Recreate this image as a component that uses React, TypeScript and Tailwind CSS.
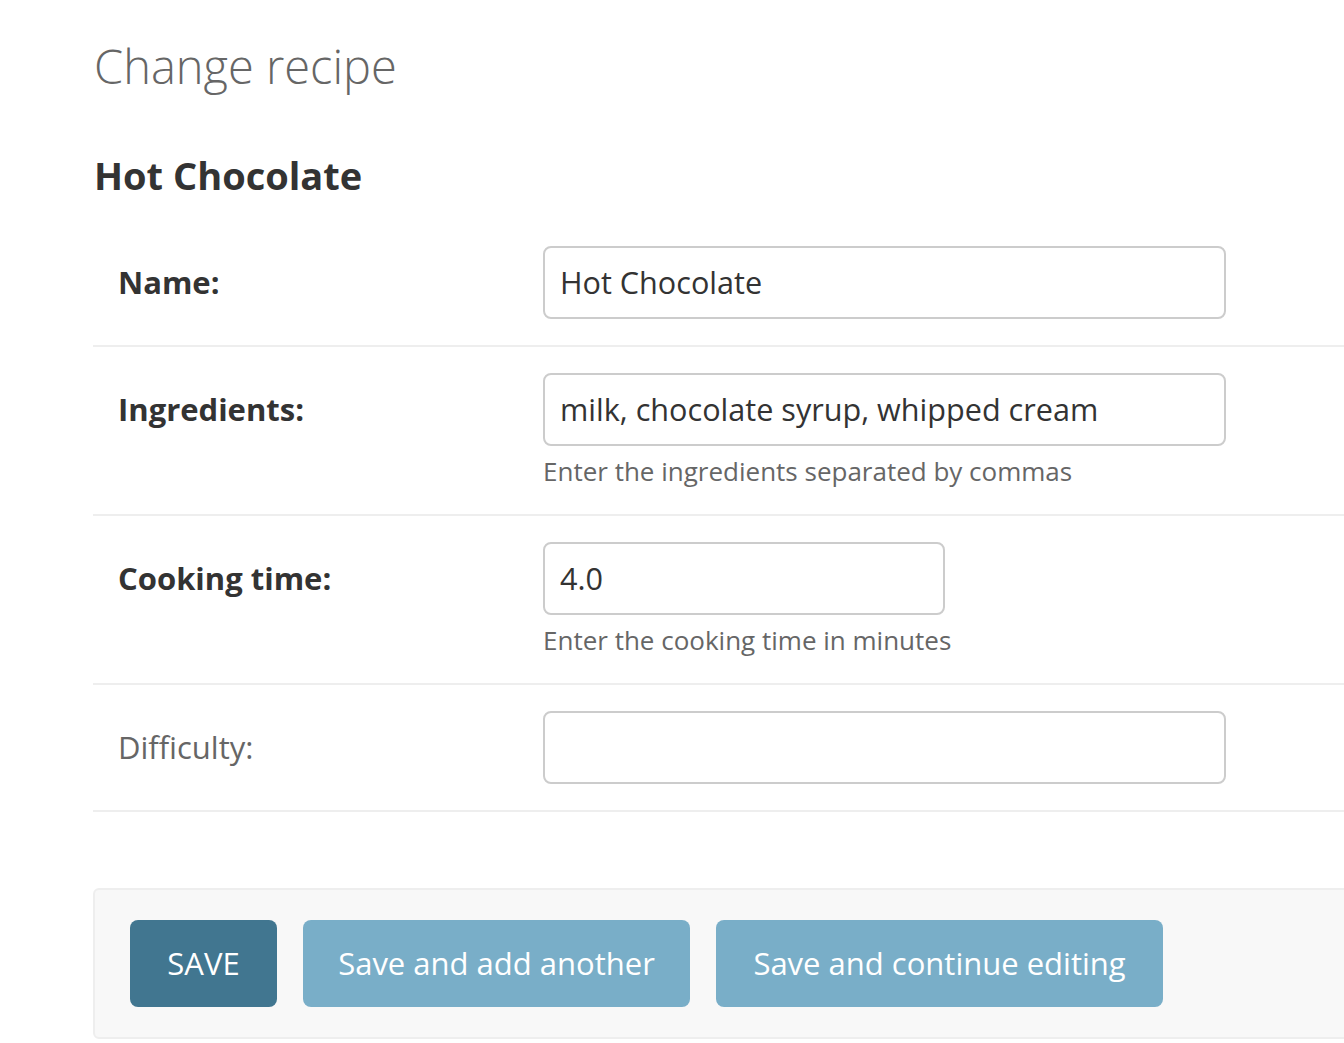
import React from "react";

const font = { fontFamily: '"Open Sans", "Noto Sans", sans-serif' };

function Row({
  label,
  bold = true,
  value,
  help,
  inputWidth = "w-[683px]",
}: {
  label: string;
  bold?: boolean;
  value: string;
  help?: string;
  inputWidth?: string;
}) {
  return (
    <div className="flex border-b-2 border-[#eeeeee] py-[26px] pl-[25px]">
      <div className="w-[425px] shrink-0 flex items-start">
        <label
          className={
            "h-[73px] flex items-center text-[31px] " +
            (bold ? "font-bold text-[#333333]" : "font-normal text-[#666666]")
          }
        >
          {label}
        </label>
      </div>
      <div className="flex flex-col">
        <div
          className={
            inputWidth +
            " h-[73px] border-2 border-[#cccccc] rounded-[8px] flex items-center px-[15px] text-[30.6px] text-[#333333]"
          }
        >
          {value}
        </div>
        {help && (
          <div className="mt-[9px] h-[33px] flex items-center text-[26px] text-[#666666]">
            {help}
          </div>
        )}
      </div>
    </div>
  );
}

export default function App() {
  return (
    <div className="w-[1344px] h-[1043px] overflow-hidden bg-white" style={font}>
      <div className="ml-[93px] w-[1290px]">
        <h1 className="pt-[36px] h-[100px] leading-[60px] text-[47px] font-light text-[#666666] pl-[1px]">
          Change recipe
        </h1>
        <h2 className="mt-[45px] leading-[60px] text-[38px] font-bold text-[#333333] pl-[1px]">
          Hot Chocolate
        </h2>
        <div className="mt-[15px]">
          <Row label="Name:" value="Hot Chocolate" />
          <Row
            label="Ingredients:"
            value="milk, chocolate syrup, whipped cream"
            help="Enter the ingredients separated by commas"
          />
          <Row
            label="Cooking time:"
            value="4.0"
            help="Enter the cooking time in minutes"
            inputWidth="w-[402px]"
          />
          <Row label="Difficulty:" bold={false} value="" />
        </div>
        <div className="mt-[76px] h-[151px] border-2 border-[#eeeeee] rounded-[6px] bg-[#f8f8f8] flex items-center gap-[26px] pl-[35px]">
          <button className="h-[87px] w-[147px] rounded-[8px] bg-[#417690] text-white text-[31px] uppercase">
            Save
          </button>
          <button className="h-[87px] w-[387px] rounded-[8px] bg-[#79aec8] text-white text-[31px]">
            Save and add another
          </button>
          <button className="h-[87px] w-[447px] rounded-[8px] bg-[#79aec8] text-white text-[31px]">
            Save and continue editing
          </button>
        </div>
      </div>
    </div>
  );
}
